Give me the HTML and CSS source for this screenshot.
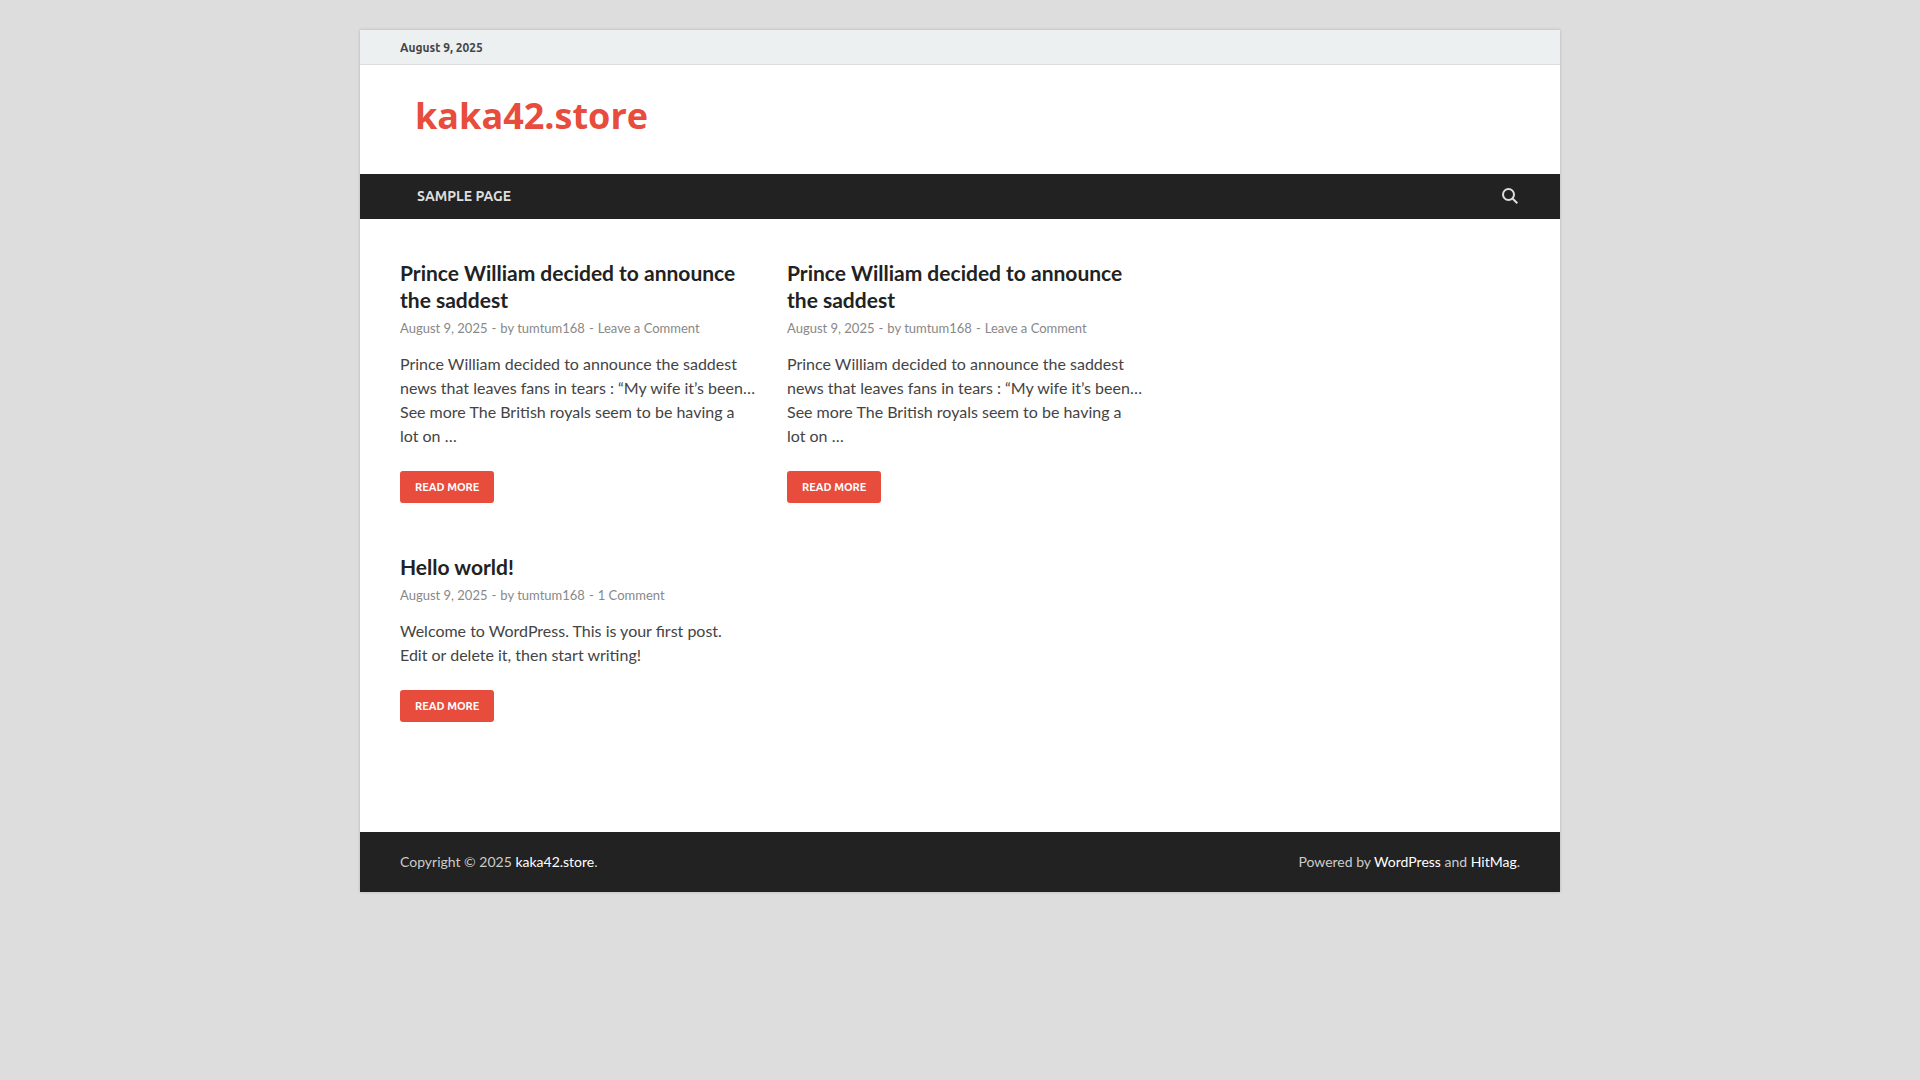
FILE: index.html
```html
<!DOCTYPE html>
<html lang="en">
<head>
<meta charset="utf-8">
<meta name="viewport" content="width=device-width, initial-scale=1">
<title>kaka42.store</title>
<link rel="stylesheet" href="styles.css">
</head>
<body>
<div class="site">
  <div class="topbar"><span class="topbar-date">August 9, 2025</span></div>
  <header class="masthead">
    <h1 class="site-title"><a href="#">kaka42.store</a></h1>
  </header>
  <nav class="main-nav" aria-label="Primary">
    <a class="nav-link" href="#">SAMPLE PAGE</a>
    <button class="search-button" type="button" aria-label="Search">
      <svg class="search-icon" viewBox="0 0 16 16" aria-hidden="true"><circle cx="6.5" cy="6.5" r="5.5"/><path d="M10.5 10.5L15.3 15.3"/></svg>
    </button>
  </nav>
  <div class="content">
    <main class="posts">
      <article class="post">
        <h2 class="post-title"><a href="#">Prince William decided to announce the saddest</a></h2>
        <div class="post-meta"><a href="#">August 9, 2025</a><span class="sep">-</span><span>by <a href="#">tumtum168</a></span><span class="sep">-</span><a href="#">Leave a Comment</a></div>
        <p class="excerpt">Prince William decided to announce the saddest news that leaves fans in tears : “My wife it’s been… See more The British royals seem to be having a lot on …</p>
        <a class="read-more" href="#">READ MORE</a>
      </article>
      <article class="post">
        <h2 class="post-title"><a href="#">Prince William decided to announce the saddest</a></h2>
        <div class="post-meta"><a href="#">August 9, 2025</a><span class="sep">-</span><span>by <a href="#">tumtum168</a></span><span class="sep">-</span><a href="#">Leave a Comment</a></div>
        <p class="excerpt">Prince William decided to announce the saddest news that leaves fans in tears : “My wife it’s been… See more The British royals seem to be having a lot on …</p>
        <a class="read-more" href="#">READ MORE</a>
      </article>
      <article class="post">
        <h2 class="post-title"><a href="#">Hello world!</a></h2>
        <div class="post-meta"><a href="#">August 9, 2025</a><span class="sep">-</span><span>by <a href="#">tumtum168</a></span><span class="sep">-</span><a href="#">1 Comment</a></div>
        <p class="excerpt">Welcome to WordPress. This is your first post.<br>Edit or delete it, then start writing!</p>
        <a class="read-more" href="#">READ MORE</a>
      </article>
    </main>
  </div>
  <footer class="footer">
    <div>Copyright © 2025 <a href="#">kaka42.store</a>.</div>
    <div>Powered by <a href="#">WordPress</a> and <a href="#">HitMag</a>.</div>
  </footer>
</div>
</body>
</html>
```
FILE: styles.css
```css
* { box-sizing: border-box; }
body {
  margin: 0;
  padding: 30px 0;
  background: #dddddd;
  color: #444444;
  font: 16px/24px Lato, sans-serif;
}
a { color: inherit; text-decoration: none; }
.site {
  max-width: 1200px;
  margin: 0 auto;
  background: #ffffff;
  box-shadow: 0 0 3px rgba(0, 0, 0, 0.2);
}
.topbar {
  padding: 6px 40px 4px;
  background: #ecf0f1;
  border-bottom: 1px solid #dddddd;
  font: 700 12px/24px Ubuntu, "Noto Sans", sans-serif;
}
.masthead { padding: 31px 55px 38px; }
.site-title {
  margin: 0;
  color: #e74c3c;
  font: 700 36px/40px "Open Sans", sans-serif;
}
.main-nav {
  display: flex;
  align-items: center;
  justify-content: space-between;
  padding: 0 40px;
  background: #222222;
  color: #dddddd;
}
.nav-link {
  padding: 0 17px;
  font: 600 14px/45px Ubuntu, "Noto Sans", sans-serif;
}
.search-button {
  display: flex;
  padding: 1px 2px 3px;
  border: 0;
  background: none;
  color: inherit;
}
.search-icon {
  width: 16px;
  height: 16px;
  fill: none;
  stroke: currentColor;
  stroke-width: 2;
}
.content { padding: 40px 40px 110px; }
.posts {
  display: grid;
  grid-template-columns: repeat(2, minmax(0, 1fr));
  gap: 50px 30px;
  max-width: 744px;
}
.post-title {
  margin: 0;
  color: #222222;
  font-size: 21px;
  font-weight: 700;
  line-height: 27px;
}
.post-meta {
  margin: 5px 0 14px;
  color: #888888;
  font-size: 13px;
  line-height: 20px;
}
.sep { padding: 0 4px; }
.excerpt { margin: 0 0 23px; }
.read-more {
  display: inline-block;
  padding: 0 15px;
  border-radius: 3px;
  background: #e74c3c;
  color: #ffffff;
  font: 700 11px/32px Ubuntu, "Noto Sans", sans-serif;
  vertical-align: top;
}
.footer {
  display: flex;
  flex-wrap: wrap;
  justify-content: space-between;
  padding: 18px 40px;
  background: #222222;
  color: #cccccc;
  font-size: 14px;
}
.footer a { color: #ffffff; }
@media (max-width: 760px) {
  .posts { grid-template-columns: 1fr; }
}
```
